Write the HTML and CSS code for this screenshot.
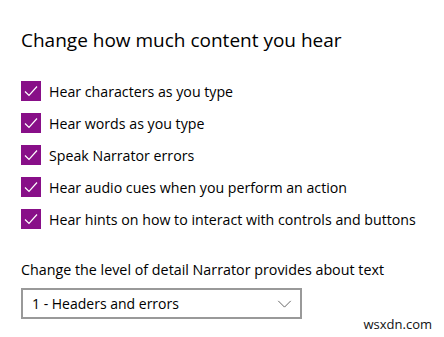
FILE: index.html
```html
<!DOCTYPE html>
<html lang="en">
<head>
    <meta charset="UTF-8">
    <title>Narrator</title>
    <link rel="stylesheet" href="styles.css">
</head>
<body>
    <div class="page">
        <h1 class="title">Change how much content you hear</h1>

        <div class="options">
            <label class="option"><span class="box"><svg viewBox="0 0 20 20"><path d="M4 10.5 L8 14.5 L16 5.5"/></svg></span>Hear characters as you type</label>
            <label class="option"><span class="box"><svg viewBox="0 0 20 20"><path d="M4 10.5 L8 14.5 L16 5.5"/></svg></span>Hear words as you type</label>
            <label class="option"><span class="box"><svg viewBox="0 0 20 20"><path d="M4 10.5 L8 14.5 L16 5.5"/></svg></span>Speak Narrator errors</label>
            <label class="option"><span class="box"><svg viewBox="0 0 20 20"><path d="M4 10.5 L8 14.5 L16 5.5"/></svg></span>Hear audio cues when you perform an action</label>
            <label class="option"><span class="box"><svg viewBox="0 0 20 20"><path d="M4 10.5 L8 14.5 L16 5.5"/></svg></span>Hear hints on how to interact with controls and buttons</label>
        </div>

        <div class="detail">
            <div class="detail-label">Change the level of detail Narrator provides about text</div>
            <div class="select">
                <span>1 - Headers and errors</span>
                <svg class="chevron" viewBox="0 0 16 9"><path d="M1 1 L8 8 L15 1"/></svg>
            </div>
        </div>
    </div>
    <div class="watermark">wsxdn.com</div>
</body>
</html>
```

FILE: styles.css
```css
* {
    box-sizing: border-box;
    margin: 0;
    padding: 0;
}

body {
    background-color: #fff;
    color: #000;
    font-family: "Open Sans", "Noto Sans", sans-serif;
    width: 444px;
    height: 337px;
    overflow: hidden;
    position: relative;
}

.page {
    padding: 27px 0 0 21px;
}

.title {
    font-size: 19px;
    font-weight: 400;
    line-height: 26px;
}

.options {
    margin-top: 28px;
    display: flex;
    flex-direction: column;
    gap: 12px;
}

.option {
    display: flex;
    align-items: center;
    height: 20px;
    font-size: 14.2px;
}

.box {
    width: 20px;
    height: 20px;
    background-color: #880f88;
    margin-right: 8px;
    flex-shrink: 0;
}

.box svg {
    width: 20px;
    height: 20px;
    display: block;
    fill: none;
    stroke: #fff;
    stroke-width: 1.2;
}

.detail {
    margin-top: 32px;
}

.detail-label {
    font-size: 14.3px;
    line-height: 18px;
}

.select {
    margin-top: 9px;
    width: 281px;
    height: 31px;
    border: 2px solid #999;
    display: flex;
    align-items: center;
    justify-content: space-between;
    padding: 0 8px 0 9px;
    font-size: 14px;
}

.chevron {
    width: 15px;
    height: 8px;
    fill: none;
    stroke: #555;
    stroke-width: 1;
}

.watermark {
    position: absolute;
    right: 12px;
    bottom: 4px;
    font-size: 13px;
    color: #111;
}
```
